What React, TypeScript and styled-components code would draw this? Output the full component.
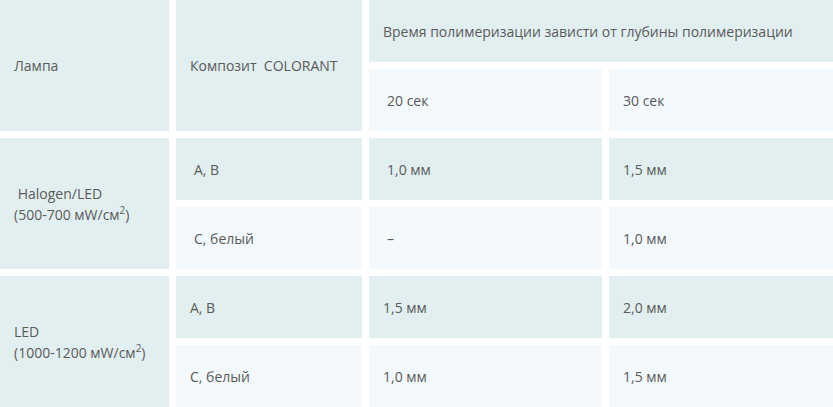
import React from "react";
import styled, { createGlobalStyle } from "styled-components";

const GlobalStyle = createGlobalStyle`
  html, body {
    margin: 0;
    padding: 0;
    background: #ffffff;
  }
  body {
    font-family: "Open Sans", "Noto Sans", sans-serif;
    font-size: 14px;
    color: #5a5a5a;
  }
`;

const Table = styled.div`
  display: grid;
  grid-template-columns: 169px 186px 233px 1fr;
  grid-auto-rows: 62px;
  gap: 7px;
  width: 833px;
  overflow: hidden;
`;

type Tone = "dark" | "light";

const Cell = styled.div<{ $tone: Tone; $rows?: number; $cols?: number; $indent?: number }>`
  display: flex;
  align-items: center;
  padding-left: ${(p) => p.$indent ?? 14}px;
  padding-right: 10px;
  background: ${(p) => (p.$tone === "dark" ? "#e2eff0" : "#f3f9fc")};
  grid-row: span ${(p) => p.$rows ?? 1};
  grid-column: span ${(p) => p.$cols ?? 1};
  line-height: 21px;
  white-space: nowrap;
`;

const Lines = styled.div`
  display: flex;
  flex-direction: column;
`;

const Sup = styled.sup`
  font-size: 10px;
  line-height: 0;
  vertical-align: 6px;
`;

type Group = {
  lamp: React.ReactNode;
  rows: { name: string; t20: string; t30: string; indent: number }[];
};

const groups: Group[] = [
  {
    lamp: (
      <Lines>
        <span>{"\u00a0"}Halogen/LED</span>
        <span>
          (500-700 мW/см<Sup>2</Sup>)
        </span>
      </Lines>
    ),
    rows: [
      { name: "А, В", t20: "1,0 мм", t30: "1,5 мм", indent: 18 },
      { name: "С, белый", t20: "–", t30: "1,0 мм", indent: 18 },
    ],
  },
  {
    lamp: (
      <Lines>
        <span>LED</span>
        <span>
          (1000-1200 мW/см<Sup>2</Sup>)
        </span>
      </Lines>
    ),
    rows: [
      { name: "А, В", t20: "1,5 мм", t30: "2,0 мм", indent: 14 },
      { name: "С, белый", t20: "1,0 мм", t30: "1,5 мм", indent: 14 },
    ],
  },
];

export default function App() {
  return (
    <>
      <GlobalStyle />
      <Table>
        <Cell $tone="dark" $rows={2}>
          Лампа
        </Cell>
        <Cell $tone="dark" $rows={2}>
          Композит&nbsp; COLORANT
        </Cell>
        <Cell $tone="dark" $cols={2}>
          Время полимеризации зависти от глубины полимеризации
        </Cell>
        <Cell $tone="light" $indent={18}>
          20 сек
        </Cell>
        <Cell $tone="light">30 сек</Cell>

        {groups.map((g, gi) => (
          <React.Fragment key={gi}>
            <Cell $tone="dark" $rows={2}>
              {g.lamp}
            </Cell>
            {g.rows.map((r, ri) => {
              const tone: Tone = ri === 0 ? "dark" : "light";
              return (
                <React.Fragment key={ri}>
                  <Cell $tone={tone} $indent={r.indent}>
                    {r.name}
                  </Cell>
                  <Cell $tone={tone} $indent={r.indent}>
                    {r.t20}
                  </Cell>
                  <Cell $tone={tone}>{r.t30}</Cell>
                </React.Fragment>
              );
            })}
          </React.Fragment>
        ))}
      </Table>
    </>
  );
}
